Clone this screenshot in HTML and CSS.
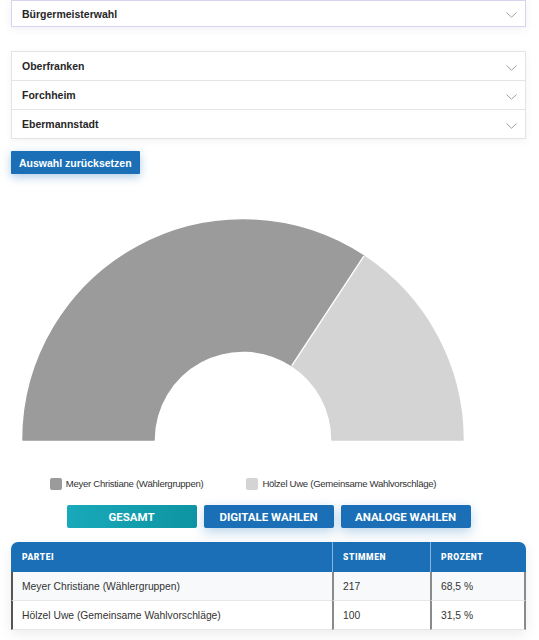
FILE: index.html
```html
<!DOCTYPE html>
<html lang="de">
<head>
  <meta charset="UTF-8" />
  <meta name="viewport" content="width=device-width, initial-scale=1.0" />
  <title>Wahlergebnis</title>
  <link rel="stylesheet" href="styles.css">
</head>
<body>
  <div class="page">
    <div class="select select-main">
      <span>Bürgermeisterwahl</span>
      <svg class="chevron" width="11" height="6" viewBox="0 0 11 6"><polyline points="0.5,0.5 5.5,5.2 10.5,0.5" /></svg>
    </div>

    <div class="select-group">
      <div class="select">
        <span>Oberfranken</span>
        <svg class="chevron" width="11" height="6" viewBox="0 0 11 6"><polyline points="0.5,0.5 5.5,5.2 10.5,0.5" /></svg>
      </div>
      <div class="select">
        <span>Forchheim</span>
        <svg class="chevron" width="11" height="6" viewBox="0 0 11 6"><polyline points="0.5,0.5 5.5,5.2 10.5,0.5" /></svg>
      </div>
      <div class="select">
        <span>Ebermannstadt</span>
        <svg class="chevron" width="11" height="6" viewBox="0 0 11 6"><polyline points="0.5,0.5 5.5,5.2 10.5,0.5" /></svg>
      </div>
    </div>

    <button class="btn-reset">Auswahl zurücksetzen</button>

    <div class="chart">
      <svg class="gauge" width="464" height="230" viewBox="0 0 464 230">
        <!-- 68,5 % / 31,5 % of the half circle -->
        <path class="seg-dark" d="M 12 225 A 220 220 0 0 1 352.9 41.2 L 280.9 150.6 A 89 89 0 0 0 143 225 Z" />
        <path class="seg-light" d="M 352.9 41.2 A 220 220 0 0 1 452 225 L 321 225 A 89 89 0 0 0 280.9 150.6 Z" />
        <line class="seg-gap" x1="280.9" y1="150.6" x2="352.9" y2="41.2" />
      </svg>
      <div class="legend">
        <div class="legend-item"><span class="swatch dark"></span>Meyer Christiane (Wählergruppen)</div>
        <div class="legend-item"><span class="swatch light"></span>Hölzel Uwe (Gemeinsame Wahlvorschläge)</div>
      </div>
    </div>

    <div class="tabs">
      <button class="tab active">Gesamt</button>
      <button class="tab">Digitale Wahlen</button>
      <button class="tab">Analoge Wahlen</button>
    </div>

    <table class="results">
      <colgroup>
        <col class="col-party">
        <col class="col-votes">
        <col class="col-percent">
      </colgroup>
      <thead>
        <tr>
          <th>Partei</th>
          <th>Stimmen</th>
          <th>Prozent</th>
        </tr>
      </thead>
      <tbody>
        <tr>
          <td>Meyer Christiane (Wählergruppen)</td>
          <td>217</td>
          <td>68,5 %</td>
        </tr>
        <tr>
          <td>Hölzel Uwe (Gemeinsame Wahlvorschläge)</td>
          <td>100</td>
          <td>31,5 %</td>
        </tr>
      </tbody>
    </table>
  </div>
</body>
</html>
```

FILE: styles.css
```css
* {
  box-sizing: border-box;
}
body {
  margin: 0;
  font-family: "Liberation Sans", Arial, sans-serif;
  background: #fff;
  color: #222;
}
.page {
  padding: 0 13px 40px 11px;
}
.select {
  display: flex;
  align-items: center;
  justify-content: space-between;
  height: 29px;
  padding: 0 8px 0 10px;
  background: #fff;
  font-size: 10.5px;
  font-weight: bold;
  color: #262626;
}
.select-main {
  height: 27px;
  border: 1px solid #d8d4ee;
  box-shadow: 0 2px 8px rgba(70, 60, 140, 0.08);
}
.select-group {
  margin-top: 24px;
  border: 1px solid #e4e4e8;
  box-shadow: 0 2px 8px rgba(0, 0, 0, 0.05);
}
.select-group .select {
  height: 28px;
}
.select-group .select + .select {
  height: 29px;
  border-top: 1px solid #e4e4e8;
}
.chevron {
  margin-top: 3px;
}
.chevron polyline {
  fill: none;
  stroke: #a0a0a0;
  stroke-width: 1;
}
.btn-reset {
  display: block;
  margin-top: 12px;
  height: 23px;
  padding: 0 8px;
  background: #1a6fb6;
  color: #fff;
  border: none;
  border-radius: 1px;
  font-family: "Liberation Sans", Arial, sans-serif;
  font-size: 10.5px;
  font-weight: bold;
  box-shadow: 0 3px 10px rgba(26, 111, 182, 0.35);
}
.chart {
  width: 464px;
  margin-top: 41px;
}
.gauge {
  display: block;
}
.seg-dark {
  fill: #9b9b9b;
  stroke: #9b9b9b;
  stroke-width: 1.5;
  stroke-linejoin: round;
}
.seg-light {
  fill: #d4d4d4;
  stroke: #d4d4d4;
  stroke-width: 1.5;
  stroke-linejoin: round;
}
.seg-gap {
  stroke: #fff;
  stroke-width: 1.2;
}
.legend {
  display: flex;
  justify-content: center;
  align-items: center;
  gap: 43px;
  height: 13px;
  margin-top: 32px;
  font-size: 9.6px;
  letter-spacing: -0.3px;
  color: #333;
}
.legend-item {
  display: flex;
  align-items: center;
  gap: 4px;
}
.swatch {
  width: 12px;
  height: 12px;
  border-radius: 2px;
}
.swatch.dark {
  background: #9b9b9b;
}
.swatch.light {
  background: #d4d4d4;
}
.tabs {
  display: flex;
  justify-content: center;
  gap: 7px;
  margin-top: 15px;
}
.tab {
  width: 130px;
  height: 23px;
  border: none;
  border-radius: 2px;
  background: #1a6fb6;
  color: #fff;
  font-family: Roboto, "Liberation Sans", sans-serif;
  font-size: 11.5px;
  font-weight: bold;
  text-transform: uppercase;
  box-shadow: 0 4px 12px rgba(26, 111, 182, 0.3);
}
.tab.active {
  background: linear-gradient(90deg, #19a9ba, #0e94a2);
  box-shadow: none;
}
.results {
  width: 100%;
  margin-top: 14px;
  table-layout: fixed;
  border-collapse: separate;
  border-spacing: 0;
  box-shadow: 0 4px 14px rgba(0, 0, 0, 0.08);
  border-radius: 7px 7px 0 0;
}
.col-party {
  width: 321px;
}
.col-votes {
  width: 98px;
}
.results th {
  height: 30px;
  padding: 0 10px;
  background: #1b6fb6;
  color: #fff;
  text-align: left;
  font-family: Roboto, "Liberation Sans", sans-serif;
  font-size: 8.5px;
  font-weight: 900;
  letter-spacing: 0.6px;
  text-transform: uppercase;
  border-left: 1px solid #86b5df;
}
.results th:first-child {
  padding-left: 11px;
  border-left: none;
  border-top-left-radius: 7px;
}
.results th:last-child {
  border-top-right-radius: 7px;
}
.results td {
  height: 29px;
  padding: 0 9px;
  font-size: 10.3px;
  color: #333;
  border-left: 2px solid #8a8a8a;
  border-bottom: 1px solid #e6e6e6;
}
.results td:first-child {
  border-left: 2px solid #555;
}
.results td:last-child {
  border-right: 2px solid #8a8a8a;
}
.results tbody tr:nth-child(odd) td {
  background: #f7f9fb;
}
```
